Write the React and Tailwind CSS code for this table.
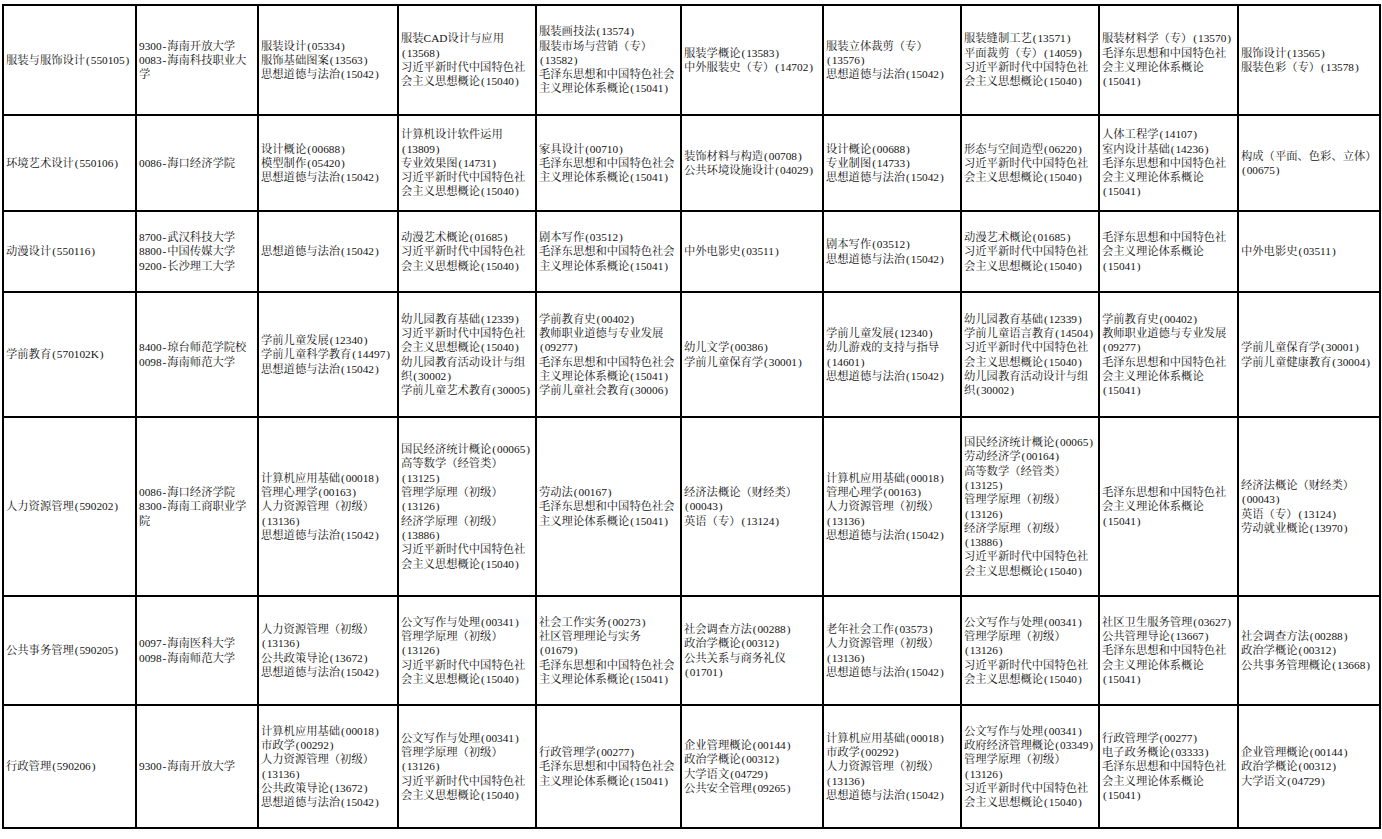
const colWidths = 'grid-cols-[133px_122px_140px_138px_145px_142px_138px_138px_139px_142px]';

// Row heights follow the line positions of the reference sheet
const rows = [
    {
        h: 'h-[110px]',
        cells: [
            ['服装与服饰设计(550105)'],
            ['9300-海南开放大学', '0083-海南科技职业大', '学'],
            ['服装设计(05334)', '服饰基础图案(13563)', '思想道德与法治(15042)'],
            ['服装CAD设计与应用', '(13568)', '习近平新时代中国特色社', '会主义思想概论(15040)'],
            ['服装画技法(13574)', '服装市场与营销（专）', '(13582)', '毛泽东思想和中国特色社会', '主义理论体系概论(15041)'],
            ['服装学概论(13583)', '中外服装史（专）(14702)'],
            ['服装立体裁剪（专）', '(13576)', '思想道德与法治(15042)'],
            ['服装缝制工艺(13571)', '平面裁剪（专）(14059)', '习近平新时代中国特色社', '会主义思想概论(15040)'],
            ['服装材料学（专）(13570)', '毛泽东思想和中国特色社', '会主义理论体系概论', '(15041)'],
            ['服饰设计(13565)', '服装色彩（专）(13578)'],
        ],
    },
    {
        h: 'h-[96px]',
        cells: [
            ['环境艺术设计(550106)'],
            ['0086-海口经济学院'],
            ['设计概论(00688)', '模型制作(05420)', '思想道德与法治(15042)'],
            ['计算机设计软件运用', '(13809)', '专业效果图(14731)', '习近平新时代中国特色社', '会主义思想概论(15040)'],
            ['家具设计(00710)', '毛泽东思想和中国特色社会', '主义理论体系概论(15041)'],
            ['装饰材料与构造(00708)', '公共环境设施设计(04029)'],
            ['设计概论(00688)', '专业制图(14733)', '思想道德与法治(15042)'],
            ['形态与空间造型(06220)', '习近平新时代中国特色社', '会主义思想概论(15040)'],
            ['人体工程学(14107)', '室内设计基础(14236)', '毛泽东思想和中国特色社', '会主义理论体系概论', '(15041)'],
            ['构成（平面、色彩、立体）', '(00675)'],
        ],
    },
    {
        h: 'h-[81px]',
        cells: [
            ['动漫设计(550116)'],
            ['8700-武汉科技大学', '8800-中国传媒大学', '9200-长沙理工大学'],
            ['思想道德与法治(15042)'],
            ['动漫艺术概论(01685)', '习近平新时代中国特色社', '会主义思想概论(15040)'],
            ['剧本写作(03512)', '毛泽东思想和中国特色社会', '主义理论体系概论(15041)'],
            ['中外电影史(03511)'],
            ['剧本写作(03512)', '思想道德与法治(15042)'],
            ['动漫艺术概论(01685)', '习近平新时代中国特色社', '会主义思想概论(15040)'],
            ['毛泽东思想和中国特色社', '会主义理论体系概论', '(15041)'],
            ['中外电影史(03511)'],
        ],
    },
    {
        h: 'h-[125px]',
        cells: [
            ['学前教育(570102K)'],
            ['8400-琼台师范学院校', '0098-海南师范大学'],
            ['学前儿童发展(12340)', '学前儿童科学教育(14497)', '思想道德与法治(15042)'],
            ['幼儿园教育基础(12339)', '习近平新时代中国特色社', '会主义思想概论(15040)', '幼儿园教育活动设计与组', '织(30002)', '学前儿童艺术教育(30005)'],
            ['学前教育史(00402)', '教师职业道德与专业发展', '(09277)', '毛泽东思想和中国特色社会', '主义理论体系概论(15041)', '学前儿童社会教育(30006)'],
            ['幼儿文学(00386)', '学前儿童保育学(30001)'],
            ['学前儿童发展(12340)', '幼儿游戏的支持与指导', '(14601)', '思想道德与法治(15042)'],
            ['幼儿园教育基础(12339)', '学前儿童语言教育(14504)', '习近平新时代中国特色社', '会主义思想概论(15040)', '幼儿园教育活动设计与组', '织(30002)'],
            ['学前教育史(00402)', '教师职业道德与专业发展', '(09277)', '毛泽东思想和中国特色社', '会主义理论体系概论', '(15041)'],
            ['学前儿童保育学(30001)', '学前儿童健康教育(30004)'],
        ],
    },
    {
        h: 'h-[179px]',
        cells: [
            ['人力资源管理(590202)'],
            ['0086-海口经济学院', '8300-海南工商职业学', '院'],
            ['计算机应用基础(00018)', '管理心理学(00163)', '人力资源管理（初级）', '(13136)', '思想道德与法治(15042)'],
            ['国民经济统计概论(00065)', '高等数学（经管类）', '(13125)', '管理学原理（初级）', '(13126)', '经济学原理（初级）', '(13886)', '习近平新时代中国特色社', '会主义思想概论(15040)'],
            ['劳动法(00167)', '毛泽东思想和中国特色社会', '主义理论体系概论(15041)'],
            ['经济法概论（财经类）', '(00043)', '英语（专）(13124)'],
            ['计算机应用基础(00018)', '管理心理学(00163)', '人力资源管理（初级）', '(13136)', '思想道德与法治(15042)'],
            ['国民经济统计概论(00065)', '劳动经济学(00164)', '高等数学（经管类）', '(13125)', '管理学原理（初级）', '(13126)', '经济学原理（初级）', '(13886)', '习近平新时代中国特色社', '会主义思想概论(15040)'],
            ['毛泽东思想和中国特色社', '会主义理论体系概论', '(15041)'],
            ['经济法概论（财经类）', '(00043)', '英语（专）(13124)', '劳动就业概论(13970)'],
        ],
    },
    {
        h: 'h-[109px]',
        cells: [
            ['公共事务管理(590205)'],
            ['0097-海南医科大学', '0098-海南师范大学'],
            ['人力资源管理（初级）', '(13136)', '公共政策导论(13672)', '思想道德与法治(15042)'],
            ['公文写作与处理(00341)', '管理学原理（初级）', '(13126)', '习近平新时代中国特色社', '会主义思想概论(15040)'],
            ['社会工作实务(00273)', '社区管理理论与实务', '(01679)', '毛泽东思想和中国特色社会', '主义理论体系概论(15041)'],
            ['社会调查方法(00288)', '政治学概论(00312)', '公共关系与商务礼仪', '(01701)'],
            ['老年社会工作(03573)', '人力资源管理（初级）', '(13136)', '思想道德与法治(15042)'],
            ['公文写作与处理(00341)', '管理学原理（初级）', '(13126)', '习近平新时代中国特色社', '会主义思想概论(15040)'],
            ['社区卫生服务管理(03627)', '公共管理导论(13667)', '毛泽东思想和中国特色社', '会主义理论体系概论', '(15041)'],
            ['社会调查方法(00288)', '政治学概论(00312)', '公共事务管理概论(13668)'],
        ],
    },
    {
        h: 'h-[123px]',
        cells: [
            ['行政管理(590206)'],
            ['9300-海南开放大学'],
            ['计算机应用基础(00018)', '市政学(00292)', '人力资源管理（初级）', '(13136)', '公共政策导论(13672)', '思想道德与法治(15042)'],
            ['公文写作与处理(00341)', '管理学原理（初级）', '(13126)', '习近平新时代中国特色社', '会主义思想概论(15040)'],
            ['行政管理学(00277)', '毛泽东思想和中国特色社会', '主义理论体系概论(15041)'],
            ['企业管理概论(00144)', '政治学概论(00312)', '大学语文(04729)', '公共安全管理(09265)'],
            ['计算机应用基础(00018)', '市政学(00292)', '人力资源管理（初级）', '(13136)', '思想道德与法治(15042)'],
            ['公文写作与处理(00341)', '政府经济管理概论(03349)', '管理学原理（初级）', '(13126)', '习近平新时代中国特色社', '会主义思想概论(15040)'],
            ['行政管理学(00277)', '电子政务概论(03333)', '毛泽东思想和中国特色社', '会主义理论体系概论', '(15041)'],
            ['企业管理概论(00144)', '政治学概论(00312)', '大学语文(04729)'],
        ],
    },
];

// Half-width punctuation in the sheet takes a full half-em, wider than Times gives it
function Line({ text }) {
    const parts = text.split(/([()\-])/);
    return (
        <span>
            {parts.map((p, i) =>
                p === '(' || p === ')' || p === '-' ? (
                    <span key={i} className="inline-block w-[0.5em] text-center">{p}</span>
                ) : (
                    p
                )
            )}
        </span>
    );
}

export default function App() {
    return (
        <div className="min-h-screen bg-white pt-[4px] pl-[2px] font-['Liberation_Serif','Noto_Serif_CJK_SC','Noto_Sans_CJK_SC',serif] text-[11.3px] leading-[14.3px] text-[#111]">
            <div className={`grid ${colWidths} w-fit border-t-2 border-l-2 border-black`}>
                {rows.map((row, r) =>
                    row.cells.map((lines, c) => (
                        <div
                            key={`${r}-${c}`}
                            className={`${row.h} flex flex-col justify-center pl-[2px] border-r-2 border-b-2 border-black whitespace-nowrap overflow-hidden`}
                        >
                            {lines.map((line, i) => (
                                <Line key={i} text={line} />
                            ))}
                        </div>
                    ))
                )}
            </div>
        </div>
    );
}
